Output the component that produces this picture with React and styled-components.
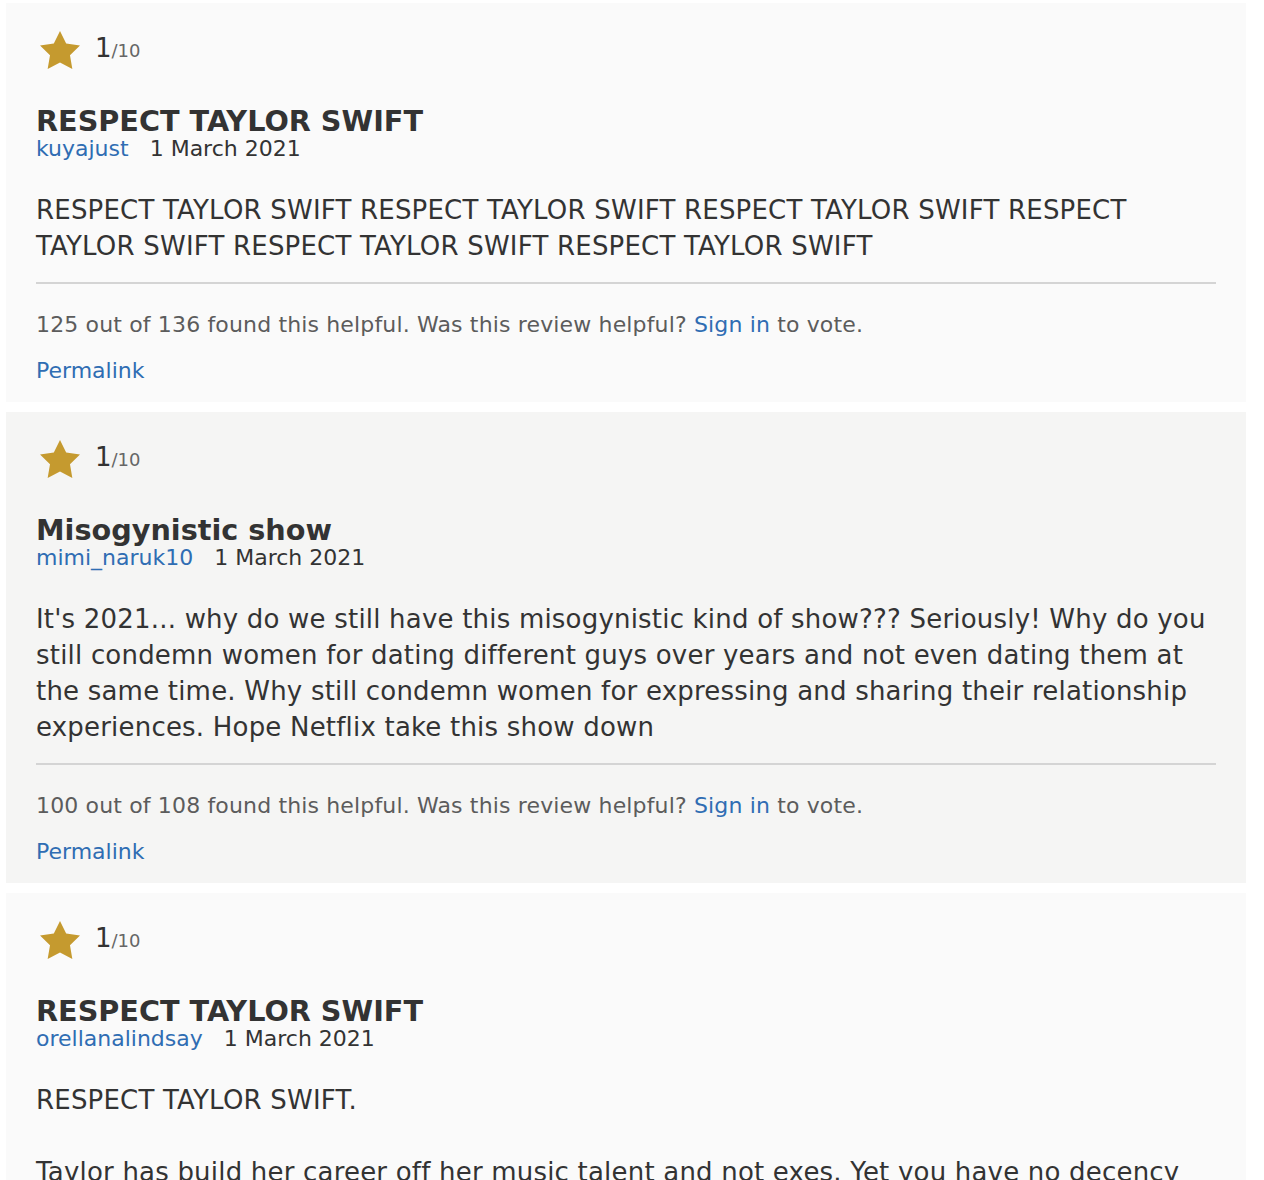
import React from "react";
import styled, { createGlobalStyle } from "styled-components";

const reviews = [
  {
    title: "RESPECT TAYLOR SWIFT",
    user: "kuyajust",
    date: "1 March 2021",
    text: ["RESPECT TAYLOR SWIFT RESPECT TAYLOR SWIFT RESPECT TAYLOR SWIFT RESPECT TAYLOR SWIFT RESPECT TAYLOR SWIFT RESPECT TAYLOR SWIFT"],
    helpful: "125 out of 136",
  },
  {
    title: "Misogynistic show",
    user: "mimi_naruk10",
    date: "1 March 2021",
    text: ["It's 2021... why do we still have this misogynistic kind of show??? Seriously! Why do you still condemn women for dating different guys over years and not even dating them at the same time. Why still condemn women for expressing and sharing their relationship experiences. Hope Netflix take this show down"],
    helpful: "100 out of 108",
  },
  {
    title: "RESPECT TAYLOR SWIFT",
    user: "orellanalindsay",
    date: "1 March 2021",
    text: [
      "RESPECT TAYLOR SWIFT.",
      "",
      "Taylor has build her career off her music talent and not exes. Yet you have no decency towards a woman who has worked hard for everything she has.",
    ],
    helpful: "98 out of 106",
  },
];

const GlobalStyle = createGlobalStyle`
  body {
    margin: 0;
    background: #ffffff;
    font-family: Verdana, "DejaVu Sans", sans-serif;
    color: #333333;
  }
`;

const List = styled.div`
  width: 1240px;
  margin: 3px 0 0 6px;
  display: flex;
  flex-direction: column;
  gap: 10px;
`;

const Card = styled.div`
  background: ${(p) => (p.$alt ? "#f5f5f4" : "#fafafa")};
  padding: 27px 30px 18px 30px;
`;

const RatingRow = styled.div`
  display: flex;
  align-items: center;
  height: 40px;
  padding-left: 4px;
  gap: 15px;
`;

const Score = styled.span`
  font-size: 26px;
  color: #333333;
  line-height: 1;
  margin-top: -4px;
`;

const OutOf = styled.span`
  font-size: 18px;
  color: #666666;
`;

const Title = styled.div`
  margin-top: 35px;
  font-size: 28.7px;
  font-weight: bold;
  line-height: 32px;
  color: #333333;
`;

const Meta = styled.div`
  margin-top: -1px;
  font-size: 22px;
  line-height: 26px;
  color: #333333;
  display: flex;
  gap: 21px;
`;

const Link = styled.a`
  color: #2f6db3;
  text-decoration: none;
  cursor: pointer;
`;

const Body = styled.div`
  margin-top: 30px;
  font-size: 26px;
  line-height: 36px;
  letter-spacing: 0.2px;
  color: #333333;
  padding-bottom: 18px;
  border-bottom: 2px solid #d4d4d4;
`;

const Para = styled.div`
  min-height: 36px;
`;

const Helpful = styled.div`
  margin-top: 28px;
  font-size: 22px;
  line-height: 26px;
  letter-spacing: 0.15px;
  color: #5c5c5c;
`;

const Permalink = styled.div`
  margin-top: 20px;
  font-size: 22px;
  line-height: 26px;
`;

function Star() {
  return (
    <svg width="40" height="38" viewBox="2 2 20 19.02">
      <polygon
        fill="#c59a2f"
        points="12,2 15.09,8.26 22,9.27 17,14.14 18.18,21.02 12,17.77 5.82,21.02 7,14.14 2,9.27 8.91,8.26"
      />
    </svg>
  );
}

function Review({ review, alt }) {
  return (
    <Card $alt={alt}>
      <RatingRow>
        <Star />
        <Score>
          1<OutOf>/10</OutOf>
        </Score>
      </RatingRow>
      <Title>{review.title}</Title>
      <Meta>
        <Link>{review.user}</Link>
        <span>{review.date}</span>
      </Meta>
      <Body>
        {review.text.map((t, i) => (
          <Para key={i}>{t}</Para>
        ))}
      </Body>
      <Helpful>
        {review.helpful} found this helpful. Was this review helpful? <Link>Sign in</Link> to vote.
      </Helpful>
      <Permalink>
        <Link>Permalink</Link>
      </Permalink>
    </Card>
  );
}

export default function App() {
  return (
    <>
      <GlobalStyle />
      <List>
        {reviews.map((r, i) => (
          <Review key={i} review={r} alt={i % 2 === 1} />
        ))}
      </List>
    </>
  );
}
